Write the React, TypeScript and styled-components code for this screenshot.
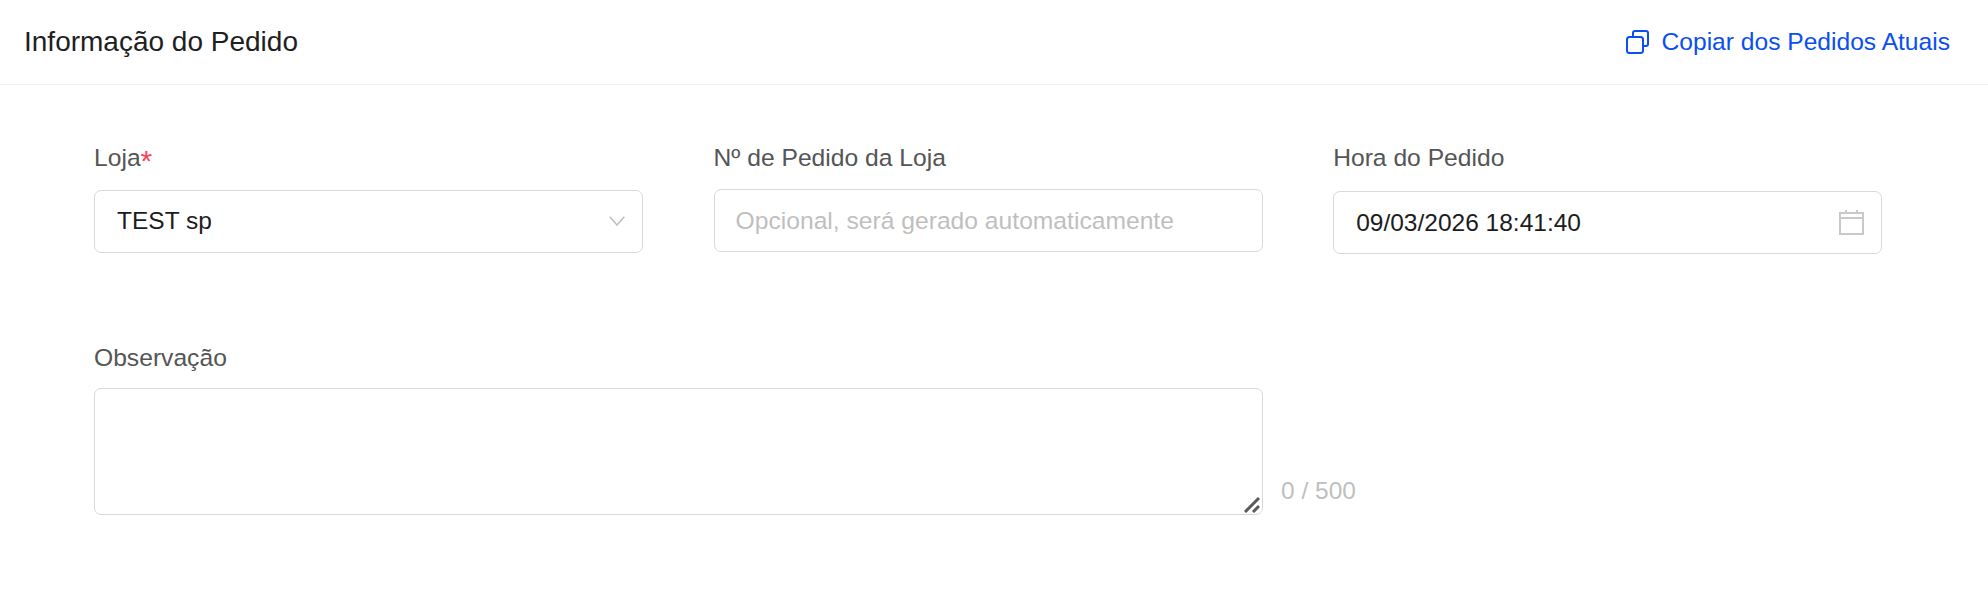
import React from "react";
import styled, { createGlobalStyle } from "styled-components";

const Global = createGlobalStyle`
  html, body { margin: 0; padding: 0; background: #fff; }
  body { font-family: "Liberation Sans", Arial, sans-serif; }
  * { box-sizing: border-box; }
`;

const Card = styled.section`
  width: 1988px;
  height: 609px;
  background: #fff;
`;

const Header = styled.header`
  height: 85px;
  border-bottom: 1px solid #efefef;
  display: flex;
  align-items: center;
  justify-content: space-between;
  padding: 0 38px 0 24px;
`;

const Title = styled.h2`
  margin: 0;
  font-size: 28px;
  font-weight: 400;
  color: #1f1f1f;
`;

const CopyLink = styled.a`
  display: flex;
  align-items: center;
  gap: 13px;
  font-size: 24.6px;
  color: #0a4ff0;
  text-decoration: none;
`;

const Body = styled.div`
  padding: 57px 0 0 94px;
`;

const Row = styled.div`
  display: grid;
  grid-template-columns: repeat(3, 549.2px);
  column-gap: 70.4px;
`;

const Field = styled.div`
  display: flex;
  flex-direction: column;
`;

const Label = styled.label<{ $gap: number }>`
  display: block;
  height: 32px;
  line-height: 32px;
  font-size: 24.65px;
  color: #555;
  margin-bottom: ${(p) => p.$gap}px;
`;

const Required = styled.span`
  color: #f5475b;
  font-size: 30px;
  line-height: 0;
  vertical-align: -5px;
`;

const Box = styled.div<{ $lift?: number }>`
  height: 63px;
  border: 1px solid #d9d9d9;
  border-radius: 7px;
  background: #fff;
  display: flex;
  align-items: center;
  justify-content: space-between;
  padding: 0 17px ${(p) => p.$lift ?? 0}px 22px;
`;

const Value = styled.span`
  font-size: 24.5px;
  color: #1c1c1c;
`;

const TextInput = styled.input`
  width: 100%;
  height: 63px;
  border: 1px solid #d9d9d9;
  border-radius: 7px;
  padding: 0 21px;
  font-family: inherit;
  font-size: 24.65px;
  color: #1c1c1c;
  outline: none;
  &::placeholder { color: #bfbfbf; opacity: 1; }
`;

const NotesRow = styled.div`
  display: flex;
  align-items: flex-end;
  margin-top: 88px;
`;

const NotesField = styled.div`
  width: 1169px;
  flex: none;
`;

const AreaWrap = styled.div`
  position: relative;
`;

const TextArea = styled.textarea`
  display: block;
  width: 100%;
  height: 127px;
  border: 1px solid #d9d9d9;
  border-radius: 7px;
  padding: 12px 21px;
  font-family: inherit;
  font-size: 24.5px;
  outline: none;
  resize: none;
`;

const ResizeGrip = styled.svg`
  position: absolute;
  right: 3px;
  bottom: 2px;
  pointer-events: none;
`;

const Counter = styled.span`
  margin-left: 18px;
  margin-bottom: 8px;
  font-size: 24.5px;
  line-height: 32px;
  color: #bfbfbf;
`;

const CopyIcon = () => (
  <svg width="23" height="24" viewBox="0 0 23 24" fill="none" stroke="#0a4ff0" strokeWidth="2">
    <rect x="1" y="7" width="16" height="16" rx="2.5" />
    <path d="M7 6V3a2 2 0 0 1 2-2h11a2 2 0 0 1 2 2v11a2 2 0 0 1-2 2h-2" />
  </svg>
);

const Chevron = () => (
  <svg width="16" height="10" viewBox="0 0 16 10" fill="none" stroke="#bdbdbd" strokeWidth="1.5">
    <path d="M.7.7 8 9l7.3-8.3" />
  </svg>
);

const CalendarIcon = () => (
  <svg width="25" height="25" viewBox="0 0 25 25" fill="none" stroke="#c9c9c9" strokeWidth="2">
    <rect x="1" y="3" width="23" height="21" />
    <path d="M1 8h23M7 0v4M18 0v4" />
  </svg>
);

export default function App() {
  return (
    <>
      <Global />
      <Card>
        <Header>
          <Title>Informação do Pedido</Title>
          <CopyLink href="#">
            <CopyIcon />
            Copiar dos Pedidos Atuais
          </CopyLink>
        </Header>
        <Body>
          <Row>
            <Field>
              <Label $gap={16}>
                Loja<Required>*</Required>
              </Label>
              <Box $lift={2}>
                <Value>TEST sp</Value>
                <Chevron />
              </Box>
            </Field>
            <Field>
              <Label $gap={15}>Nº de Pedido da Loja</Label>
              <TextInput placeholder="Opcional, será gerado automaticamente" />
            </Field>
            <Field>
              <Label $gap={17}>Hora do Pedido</Label>
              <Box>
                <Value>09/03/2026 18:41:40</Value>
                <CalendarIcon />
              </Box>
            </Field>
          </Row>
          <NotesRow>
            <NotesField>
              <Label $gap={14}>Observação</Label>
              <AreaWrap>
                <TextArea />
                <ResizeGrip width="16" height="16" viewBox="0 0 16 16" fill="none" stroke="#5a5a5a" strokeWidth="3">
                  <path d="M1 15 15 1M9 15l6-6" />
                </ResizeGrip>
              </AreaWrap>
            </NotesField>
            <Counter>0 / 500</Counter>
          </NotesRow>
        </Body>
      </Card>
    </>
  );
}
